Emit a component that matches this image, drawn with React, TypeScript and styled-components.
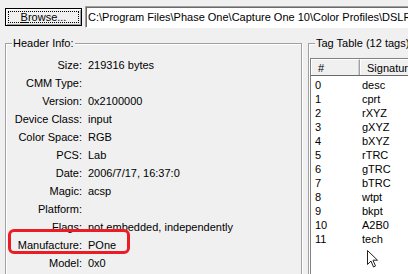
import styled, { createGlobalStyle } from 'styled-components';

const GlobalStyle = createGlobalStyle`
  html, body {
    margin: 0;
    padding: 0;
    background: #f0f0f0;
  }
  body {
    font-family: "Liberation Sans", Arial, sans-serif;
    font-size: 11px;
    color: #000;
  }
`;

const headerRows: [string, string][] = [
  ['Size:', '219316 bytes'],
  ['CMM Type:', ''],
  ['Version:', '0x2100000'],
  ['Device Class:', 'input'],
  ['Color Space:', 'RGB'],
  ['PCS:', 'Lab'],
  ['Date:', '2006/7/17, 16:37:0'],
  ['Magic:', 'acsp'],
  ['Platform:', ''],
  ['Flags:', 'not embedded, independently'],
  ['Manufacture:', 'POne'],
  ['Model:', '0x0'],
];

const tags = [
  'desc', 'cprt', 'rXYZ', 'gXYZ', 'bXYZ', 'rTRC',
  'gTRC', 'bTRC', 'wtpt', 'bkpt', 'A2B0', 'tech',
];

export default function App() {
  return (
    <Window>
      <GlobalStyle />
      <TopRow>
        <BrowseButton>
          <FocusRing>
            <u>B</u>rowse...
          </FocusRing>
        </BrowseButton>
        <PathBox>C:\Program Files\Phase One\Capture One 10\Color Profiles\DSLR\Phase One</PathBox>
      </TopRow>
      <Panels>
        <HeaderGroup>
          <GroupTitle>Header Info:</GroupTitle>
          <InfoGrid>
            {headerRows.map(([label, value]) => (
              <InfoRow key={label} $marked={label === 'Manufacture:'}>
                <InfoLabel>{label}</InfoLabel>
                <span>{value}</span>
              </InfoRow>
            ))}
          </InfoGrid>
          <Highlight />
        </HeaderGroup>
        <TagGroup>
          <GroupTitle>Tag Table (12 tags)</GroupTitle>
          <ListView>
            <ListHeader>
              <HeaderCell $width={49}>#</HeaderCell>
              <HeaderCell $width={120}>Signature</HeaderCell>
            </ListHeader>
            <ListBody>
              {tags.map((sig, i) => (
                <ListRow key={sig}>
                  <IndexCell>{i}</IndexCell>
                  <span>{sig}</span>
                </ListRow>
              ))}
            </ListBody>
            <Cursor width="12" height="19" viewBox="0 0 12 19">
              <path
                d="M0.5 0.5 L0.5 14.5 L4 11 L6.5 17 L8.5 16 L6 10.2 L10.5 10.2 Z"
                fill="#fff"
                stroke="#222"
                strokeWidth="1"
              />
            </Cursor>
          </ListView>
        </TagGroup>
      </Panels>
    </Window>
  );
}

const Window = styled.div`
  width: 408px;
  height: 274px;
  overflow: hidden;
  box-sizing: border-box;
  padding: 6px 0 0 5px;
`;

const TopRow = styled.div`
  display: flex;
  align-items: center;
  gap: 3px;
  height: 22px;
  white-space: nowrap;
`;

const BrowseButton = styled.div`
  box-sizing: border-box;
  flex: none;
  width: 77px;
  height: 18px;
  padding: 2px;
  border: 1px solid #000;
  background: #f0f0f0;
  box-shadow: inset 1px 1px 0 #fff, inset -1px -1px 0 #a0a0a0;
`;

const FocusRing = styled.div`
  box-sizing: border-box;
  height: 12px;
  border: 1px dotted #000;
  text-align: center;
  line-height: 10px;
  white-space: nowrap;
`;

const PathBox = styled.div`
  box-sizing: border-box;
  flex: none;
  height: 22px;
  padding: 0 2px;
  display: flex;
  align-items: center;
  background: #fff;
  border-top: 1px solid #a0a0a0;
  border-left: 1px solid #a0a0a0;
  border-bottom: 1px solid #fff;
  box-shadow: inset 1px 1px 0 #696969;
`;

const Panels = styled.div`
  display: flex;
  gap: 6px;
  margin-top: 9px;
  height: 260px;
`;

const GroupBox = styled.fieldset`
  position: relative;
  box-sizing: border-box;
  margin: 0;
  padding: 0;
  min-width: 0;
  border: 1px solid #a0a0a0;
  border-bottom: none;
  box-shadow: inset 1px 1px 0 #fff;
`;

const HeaderGroup = styled(GroupBox)`
  flex: none;
  width: 297px;
`;

const TagGroup = styled(GroupBox)`
  flex: none;
  width: 140px;
  border-right: none;
`;

const Highlight = styled.div`
  position: absolute;
  top: -6px;
  right: -2px;
  bottom: 0;
  width: 1px;
  background: #fff;
`;

const GroupTitle = styled.legend`
  margin-left: 6px;
  padding: 0 1px;
  background: #f0f0f0;
  line-height: 13px;
  white-space: nowrap;
`;

const InfoGrid = styled.div`
  display: grid;
  grid-auto-rows: 18px;
  margin-top: 6px;
`;

const InfoRow = styled.div<{ $marked?: boolean }>`
  position: relative;
  display: grid;
  grid-template-columns: 76px 1fr;
  column-gap: 6px;
  align-items: center;
  white-space: nowrap;

  &::after {
    content: '';
    display: ${({ $marked }) => ($marked ? 'block' : 'none')};
    position: absolute;
    left: 2px;
    top: -7px;
    width: 122px;
    bottom: 0;
    box-sizing: border-box;
    border: 3px solid #ec1c24;
    border-radius: 6px;
  }
`;

const InfoLabel = styled.span`
  text-align: right;
`;

const ListView = styled.div`
  position: relative;
  margin: 8px 0 0 1px;
  height: 220px;
  background: #fff;
  border-top: 1px solid #828282;
  border-left: 1px solid #828282;
`;

const ListHeader = styled.div`
  display: flex;
  height: 16px;
  background: #f0f0f0;
  border-bottom: 1px solid #696969;
`;

const HeaderCell = styled.div<{ $width: number }>`
  box-sizing: border-box;
  flex: none;
  width: ${({ $width }) => $width}px;
  padding-left: 6px;
  display: flex;
  align-items: center;
  border-top: 1px solid #fff;
  border-left: 1px solid #fff;
  border-right: 1px solid #a0a0a0;
  box-shadow: inset -1px 0 0 #d0d0d0;
`;

const ListBody = styled.div`
  padding-top: 2px;
`;

const ListRow = styled.div`
  display: flex;
  height: 14px;
  align-items: center;
`;

const IndexCell = styled.span`
  width: 47px;
  padding-left: 4px;
`;

const Cursor = styled.svg`
  position: absolute;
  left: 56px;
  top: 191px;
`;
